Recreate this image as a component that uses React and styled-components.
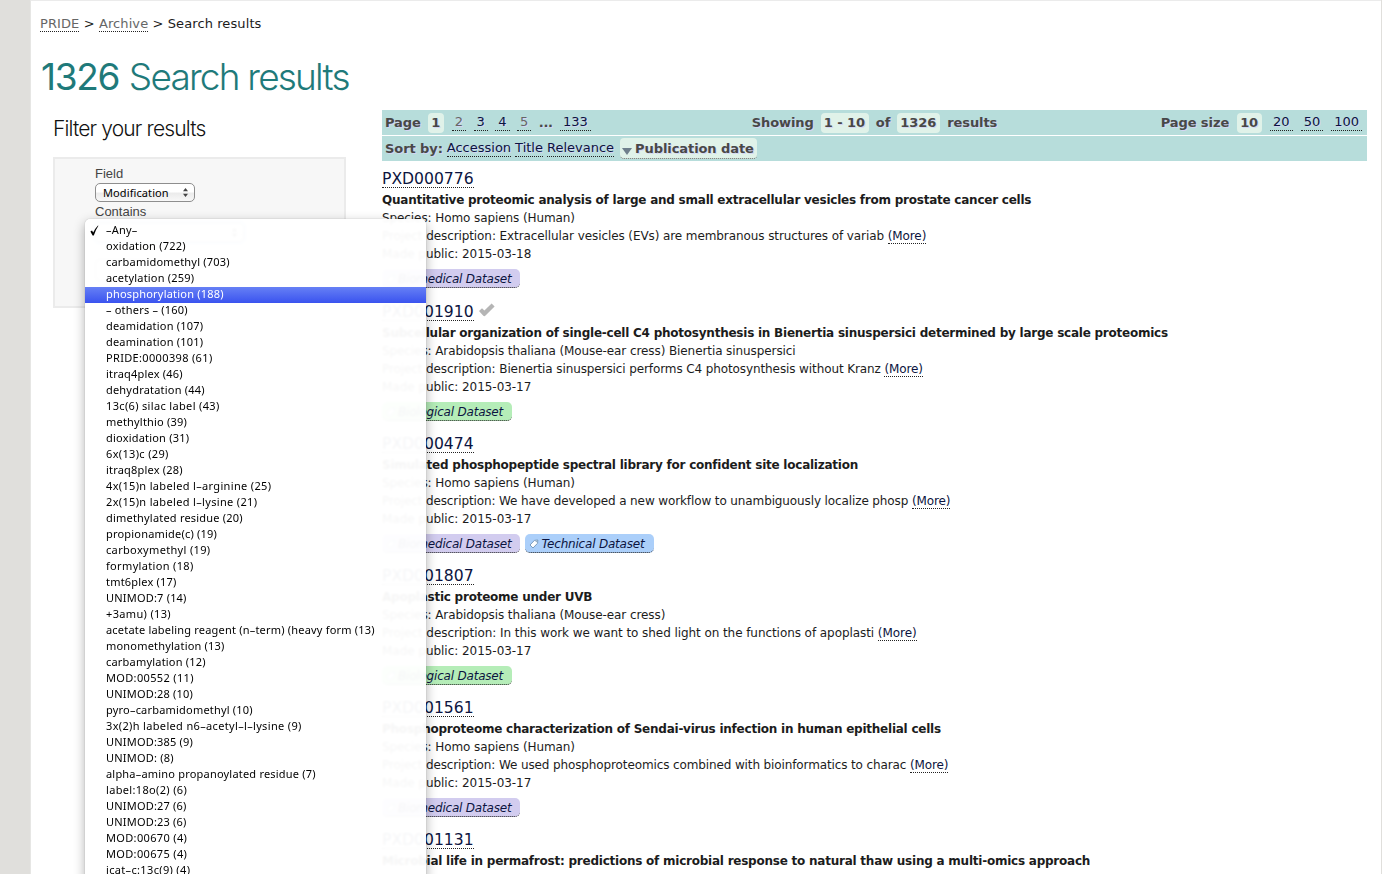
import React from "react";
import styled, { createGlobalStyle, css } from "styled-components";

const Global = createGlobalStyle`
  * { box-sizing: border-box; }
  html, body { margin: 0; height: 100%; }
  body {
    overflow: hidden;
    background: #e0dfdc;
    font-family: "DejaVu Sans", sans-serif;
    font-size: 12px;
    color: #1c1c1c;
  }
`;

const Page = styled.div`
  height: 874px;
  overflow: hidden;
  display: flex;
  padding: 0 1px 0 30px;
`;

const Sheet = styled.main`
  flex: 1;
  border-left: 1px solid #e6e6e4;
  border-top: 1px solid #ebebeb;
  background: #fff;
  padding: 14px 14px 0 9px;
`;

const dotted = css`
  color: ${(p) => p.$color || "#0c1440"};
  text-decoration: none;
  border-bottom: 1px dotted #222;
`;

const Link = styled.a`
  ${dotted}
`;

const Crumbs = styled.nav`
  height: 18px;
  line-height: 18px;
  font-size: 13px;
  white-space: pre;
  letter-spacing: 0.1px;
`;
const CrumbLink = styled.a`
  ${dotted}
  display: inline-block;
  line-height: 15px;
`;

const Title = styled.h1`
  margin: 23px 0 0 1px;
  height: 42px;
  line-height: 41px;
  font-family: Inter, "Liberation Sans", sans-serif;
  font-size: 37px;
  font-weight: 300;
  letter-spacing: -1.8px;
  color: #1f7a7a;
  white-space: pre;
`;
const Count = styled.span`
  font-weight: 400;
  letter-spacing: -1.3px;
  margin-right: 1px;
`;

const Columns = styled.div`
  display: flex;
  margin-top: 12px;
`;

const Side = styled.aside`
  width: 342px;
  flex: none;
  padding-left: 13px;
`;

const SideTitle = styled.h2`
  margin: 5px 0 0;
  height: 28px;
  line-height: 28px;
  font-family: Inter, "Liberation Sans", sans-serif;
  font-size: 21px;
  font-weight: 300;
  letter-spacing: -0.85px;
  color: #111;
`;

const Panel = styled.div`
  position: relative;
  margin-top: 14px;
  width: 293px;
  height: 151px;
  border: 2px solid #ebebeb;
  background: #f7f7f7;
  padding: 7px 0 0 40px;
  display: flex;
  flex-direction: column;
  align-items: flex-start;
`;

const Label = styled.label`
  font: 13px/${(p) => p.$line}px "Liberation Sans", sans-serif;
  color: #444;
  height: ${(p) => p.$h}px;
`;

const Select = styled.div`
  width: ${(p) => p.$w}px;
  height: 19px;
  flex: none;
  border: 1px solid #8e8e8e;
  border-radius: 5px;
  background: linear-gradient(#fff, #fff 45%, #ececec 55%, #f8f8f8);
  font: 11px/17px "Noto Sans", sans-serif;
  letter-spacing: 0.1px;
  color: #000;
  padding: 0 5px 0 7px;
  display: flex;
  justify-content: ${(p) => (p.$focus ? "flex-end" : "space-between")};
  align-items: center;
  ${(p) => p.$focus && css`border-color: #bbb; box-shadow: 0 0 2px 2px #a9c8ee;`}
`;

const Button = styled.div`
  margin-top: 17px;
  width: 62px;
  height: 22px;
  border: 1px solid #bbb;
  border-radius: 4px;
  background: #f2f2f2;
`;

const Menu = styled.ul`
  position: absolute;
  z-index: 2;
  left: 30px;
  top: 60px;
  width: 341px;
  height: 720px;
  margin: 0;
  padding: 4px 0 0;
  list-style: none;
  background: rgba(255, 255, 255, 0.955);
  backdrop-filter: blur(1px);
  border-radius: 5px 5px 0 0;
  box-shadow: 0 4px 12px rgba(0, 0, 0, 0.32), 0 0 1px rgba(0, 0, 0, 0.4);
`;

const Item = styled.li`
  display: flex;
  align-items: center;
  height: 16px;
  font: 11px/14px "Noto Sans", sans-serif;
  letter-spacing: ${(p) => (p.$wide ? 0.34 : 0.2)}px;
  padding: 0 0 3px 21px;
  white-space: pre;
  color: ${(p) => (p.$on ? "#fff" : "#000")};
  ${(p) => p.$on && css`background: linear-gradient(#6680f5, #3a53ef);`}
`;
const Tick = styled.svg`
  margin: 2px 7px 0 -16px;
`;

const Main = styled.section`
  flex: 1;
  min-width: 0;
`;

const Bar = styled.div`
  height: 25px;
  margin-bottom: ${(p) => p.$gap || 0}px;
  background: #b7dddb;
  color: #484848;
  font-size: 13px;
  font-weight: bold;
  letter-spacing: -0.08px;
  text-shadow: 1px 1px 0 #d3d6f2;
  display: grid;
  grid-template-columns: 1fr auto 1fr;
  align-items: center;
  padding: 0 5px 0 3px;
  white-space: nowrap;
`;
const Group = styled.div`
  display: flex;
  align-items: center;
  justify-content: ${(p) => (p.$end ? "flex-end" : "flex-start")};
  gap: ${(p) => p.$gap}px;
  padding-left: ${(p) => p.$indent || 0}px;
`;
const Chip = styled.span`
  display: inline-flex;
  align-items: center;
  height: 20px;
  padding: 0 4px 1px 3px;
  border-radius: 4px;
  background: #e0f2e9;
`;
const SortChip = styled(Chip)`
  height: 21px;
  gap: 3px;
  margin-left: 2px;
  padding: 1px 3px 0 2px;
  border-bottom: 1px dotted #666;
`;
const SortArrow = styled.svg`
  margin-top: 5px;
`;
const Dots = styled.span`
  letter-spacing: -0.4px;
`;
const PageLink = styled.a`
  ${dotted}
  font-size: 13px;
  font-weight: normal;
  letter-spacing: 0;
  height: 17px;
  line-height: 16px;
  padding: 0 ${(p) => p.$pad ?? 3}px;
`;

const Entries = styled.div`
  padding-top: 5px;
`;
const Entry = styled.article`
  height: 132px;
  margin-top: ${(p) => (p.$reviewed ? 1 : 0)}px;
`;
const EntryHead = styled.header`
  height: 25px;
  display: flex;
  align-items: flex-start;
  gap: 4px;
  padding-top: 2px;
`;
const Accession = styled.a`
  ${dotted}
  font-size: 15.6px;
  height: 20px;
  line-height: 23px;
`;
const Line = styled.p`
  margin: 0;
  height: 18px;
  line-height: 18px;
  white-space: pre;
  letter-spacing: ${(p) => p.$ls ?? -0.09}px;
`;
const Heading = styled(Line)`
  font-weight: bold;
  letter-spacing: -0.235px;
`;
const Tags = styled.div`
  display: flex;
  gap: 5px;
  margin-top: 6px;
`;
const tints = { Biomedical: "#d2ccef", Biological: "#b5edb8", Technical: "#abcffa" };
const Tag = styled.a`
  display: flex;
  align-items: center;
  height: 19px;
  padding: 2px 9px 0 4px;
  gap: 2px;
  border-radius: 5px;
  border-bottom: 1px dotted #222;
  background: ${(p) => tints[p.$kind]};
  color: #0c1440;
  font-style: italic;
  letter-spacing: -0.2px;
  white-space: nowrap;
`;

const TagIcon = () => (
  <svg width="10" height="10" viewBox="0 0 10 10">
    <path d="M1 6 5.4 1.4 8.8 1 8.6 4.2 4 9Z" fill="#fff" stroke="#6f93b5" strokeWidth=".9" strokeLinejoin="round" />
    <circle cx="7.2" cy="2.6" r=".6" fill="#5d84a8" />
  </svg>
);

const items = [
  "oxidation (722)", "carbamidomethyl (703)", "acetylation (259)", "phosphorylation (188)", "– others – (160)",
  "deamidation (107)", "deamination (101)", "PRIDE:0000398 (61)", "itraq4plex (46)", "dehydratation (44)",
  "13c(6) silac label (43)", "methylthio (39)", "dioxidation (31)", "6x(13)c (29)", "itraq8plex (28)",
  "4x(15)n labeled l–arginine (25)", "2x(15)n labeled l–lysine (21)", "dimethylated residue (20)",
  "propionamide(c) (19)", "carboxymethyl (19)", "formylation (18)", "tmt6plex (17)", "UNIMOD:7 (14)",
  "+3amu) (13)", "acetate labeling reagent (n–term) (heavy form (13)", "monomethylation (13)",
  "carbamylation (12)", "MOD:00552 (11)", "UNIMOD:28 (10)", "pyro–carbamidomethyl (10)",
  "3x(2)h labeled n6–acetyl–l–lysine (9)", "UNIMOD:385 (9)", "UNIMOD: (8)",
  "alpha–amino propanoylated residue (7)", "label:18o(2) (6)", "UNIMOD:27 (6)", "UNIMOD:23 (6)",
  "MOD:00670 (4)", "MOD:00675 (4)", "icat–c:13c(9) (4)",
];
const isWide = (t) => /^\d|^\+|PRIDE|MOD:0|label:|icat|formyl|carboxy/.test(t);

const entries = [
  { id: "PXD000776", title: "Quantitative proteomic analysis of large and small extracellular vesicles from prostate cancer cells", species: "Homo sapiens (Human)", text: "Extracellular vesicles (EVs) are membranous structures of variab", date: "2015-03-18", tags: ["Biomedical"] },
  { id: "PXD001910", reviewed: true, title: "Subcellular organization of single-cell C4 photosynthesis in Bienertia sinuspersici determined by large scale proteomics", species: "Arabidopsis thaliana (Mouse-ear cress) Bienertia sinuspersici", text: "Bienertia sinuspersici performs C4 photosynthesis without Kranz", date: "2015-03-17", tags: ["Biological"], ls: -0.105 },
  { id: "PXD000474", title: "Simulated phosphopeptide spectral library for confident site localization", species: "Homo sapiens (Human)", text: "We have developed a new workflow to unambiguously localize phosp", date: "2015-03-17", tags: ["Biomedical", "Technical"], ls: -0.115 },
  { id: "PXD001807", title: "Apoplastic proteome under UVB", species: "Arabidopsis thaliana (Mouse-ear cress)", text: "In this work we want to shed light on the functions of apoplasti", date: "2015-03-17", tags: ["Biological"], ls: -0.068 },
  { id: "PXD001561", title: "Phosphoproteome characterization of Sendai-virus infection in human epithelial cells", species: "Homo sapiens (Human)", text: "We used phosphoproteomics combined with bioinformatics to charac", date: "2015-03-17", tags: ["Biomedical"], ls: -0.12 },
  { id: "PXD001131", title: "Microbial life in permafrost: predictions of microbial response to natural thaw using a multi-omics approach" },
];

const Arrows = () => (
  <svg width="7" height="9" viewBox="0 0 7 9">
    <path d="M3.5 0 6 3.3H1ZM3.5 9 6 5.7H1Z" fill="#444" />
  </svg>
);

export default function App() {
  return (
    <Page>
      <Global />
      <Sheet>
        <Crumbs>
          <CrumbLink $color="#666">PRIDE</CrumbLink>{" > "}
          <CrumbLink $color="#666">Archive</CrumbLink>{" > Search results"}
        </Crumbs>
        <Title><Count>1326</Count> Search results</Title>
        <Columns>
          <Side>
            <SideTitle>Filter your results</SideTitle>
            <Panel>
              <Label $line={16} $h={17}>Field</Label>
              <Select $w={100}>Modification<Arrows /></Select>
              <Label $line={19} $h={21}>Contains</Label>
              <Select $w={149} $focus><Arrows /></Select>
              <Button />
              <Menu>
                <Item>
                  <Tick width="9" height="11" viewBox="0 0 9 11">
                    <path d="M.4 6.4 2 5.4 3.2 7.6Q5 3.4 8 .4L8.4.8Q5.6 5 3.8 10.4H2.6Z" fill="#000" />
                  </Tick>
                  –Any–
                </Item>
                {items.map((t) => <Item key={t} $wide={isWide(t)} $on={t.startsWith("phos")}>{t}</Item>)}
              </Menu>
            </Panel>
          </Side>
          <Main>
            <Bar $gap={1}>
              <Group $gap={7.5}>
                Page <Chip>1</Chip>
                <PageLink $color="#666">2</PageLink><PageLink>3</PageLink><PageLink>4</PageLink>
                <PageLink $color="#666">5</PageLink><Dots>...</Dots><PageLink>133</PageLink>
              </Group>
              <Group $gap={7} $indent={2}>Showing <Chip>1 - 10</Chip> of <Chip>1326</Chip> results</Group>
              <Group $gap={8} $end>
                Page size <Chip>10</Chip>
                <PageLink>20</PageLink><PageLink>50</PageLink><PageLink>100</PageLink>
              </Group>
            </Bar>
            <Bar>
              <Group $gap={4}>
                Sort by: <PageLink $pad={0}>Accession</PageLink><PageLink $pad={0}>Title</PageLink>
                <PageLink $pad={0}>Relevance</PageLink>
                <SortChip>
                  <SortArrow width="10" height="7" viewBox="0 0 10 7"><path d="M0 0h10L5 7Z" fill="#6f7f8c" /></SortArrow>
                  Publication date
                </SortChip>
              </Group>
            </Bar>
            <Entries>
              {entries.map((e) => (
                <Entry key={e.id} $reviewed={e.reviewed}>
                  <EntryHead>
                    <Accession>{e.id}</Accession>
                    {e.reviewed && (
                      <svg width="18" height="16" viewBox="0 0 18 16">
                        <path d="M1 10 4 7.2 6.4 9.4 13.6 2.6 16.6 5.6 7 15Q5.6 15.6 4.6 14Z" fill="#b5b5b5" />
                      </svg>
                    )}
                  </EntryHead>
                  <Heading>{e.title}</Heading>
                  {e.species && (
                    <>
                      <Line>Species: {e.species}</Line>
                      <Line $ls={e.ls}>Project description: {e.text} <Link>(More)</Link></Line>
                      <Line $ls={-0.04}>Made public: {e.date}</Line>
                      <Tags>
                        {e.tags.map((t) => <Tag key={t} $kind={t}><TagIcon />{t} Dataset</Tag>)}
                      </Tags>
                    </>
                  )}
                </Entry>
              ))}
            </Entries>
          </Main>
        </Columns>
      </Sheet>
    </Page>
  );
}
